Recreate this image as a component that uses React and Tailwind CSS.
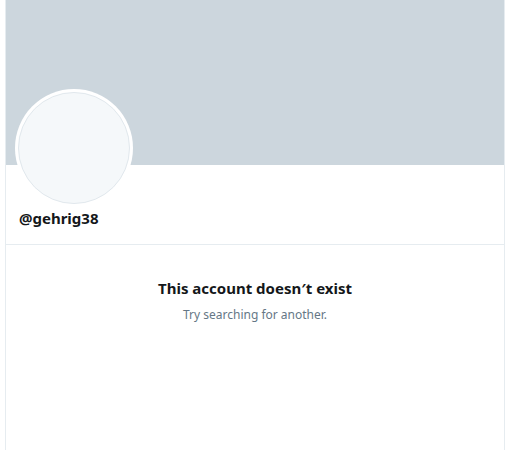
export default function App() {
  return (
    <div className="min-h-[450px] bg-white" style={{ fontFamily: '"Noto Sans", "Liberation Sans", sans-serif' }}>
      <div className="ml-[5px] flex min-h-[450px] w-[500px] flex-col border-x border-[#e6ecf0]">
        <div className="h-[165px] bg-[#ccd6dd]" />
        <div className="border-b border-[#e6ecf0] px-[9px] pb-[15px]">
          <div className="-mt-[76px] h-[118px] w-[118px] rounded-full bg-white p-[3px]">
            <div className="h-full w-full rounded-full border border-[#e1e8ed] bg-[#f5f8fa]" />
          </div>
          <div className="mt-[0px] pl-[4px] text-[15px] font-bold leading-[22px] text-[#14171a]">@gehrig38</div>
        </div>
        <div className="flex flex-col items-center pt-[32px]">
          <div className="text-[15px] font-bold leading-[22px] text-[#14171a]">This account doesn′t exist</div>
          <div className="mt-[7px] text-[12px] leading-[18px] text-[#657786]">Try searching for another.</div>
        </div>
      </div>
    </div>
  );
}
